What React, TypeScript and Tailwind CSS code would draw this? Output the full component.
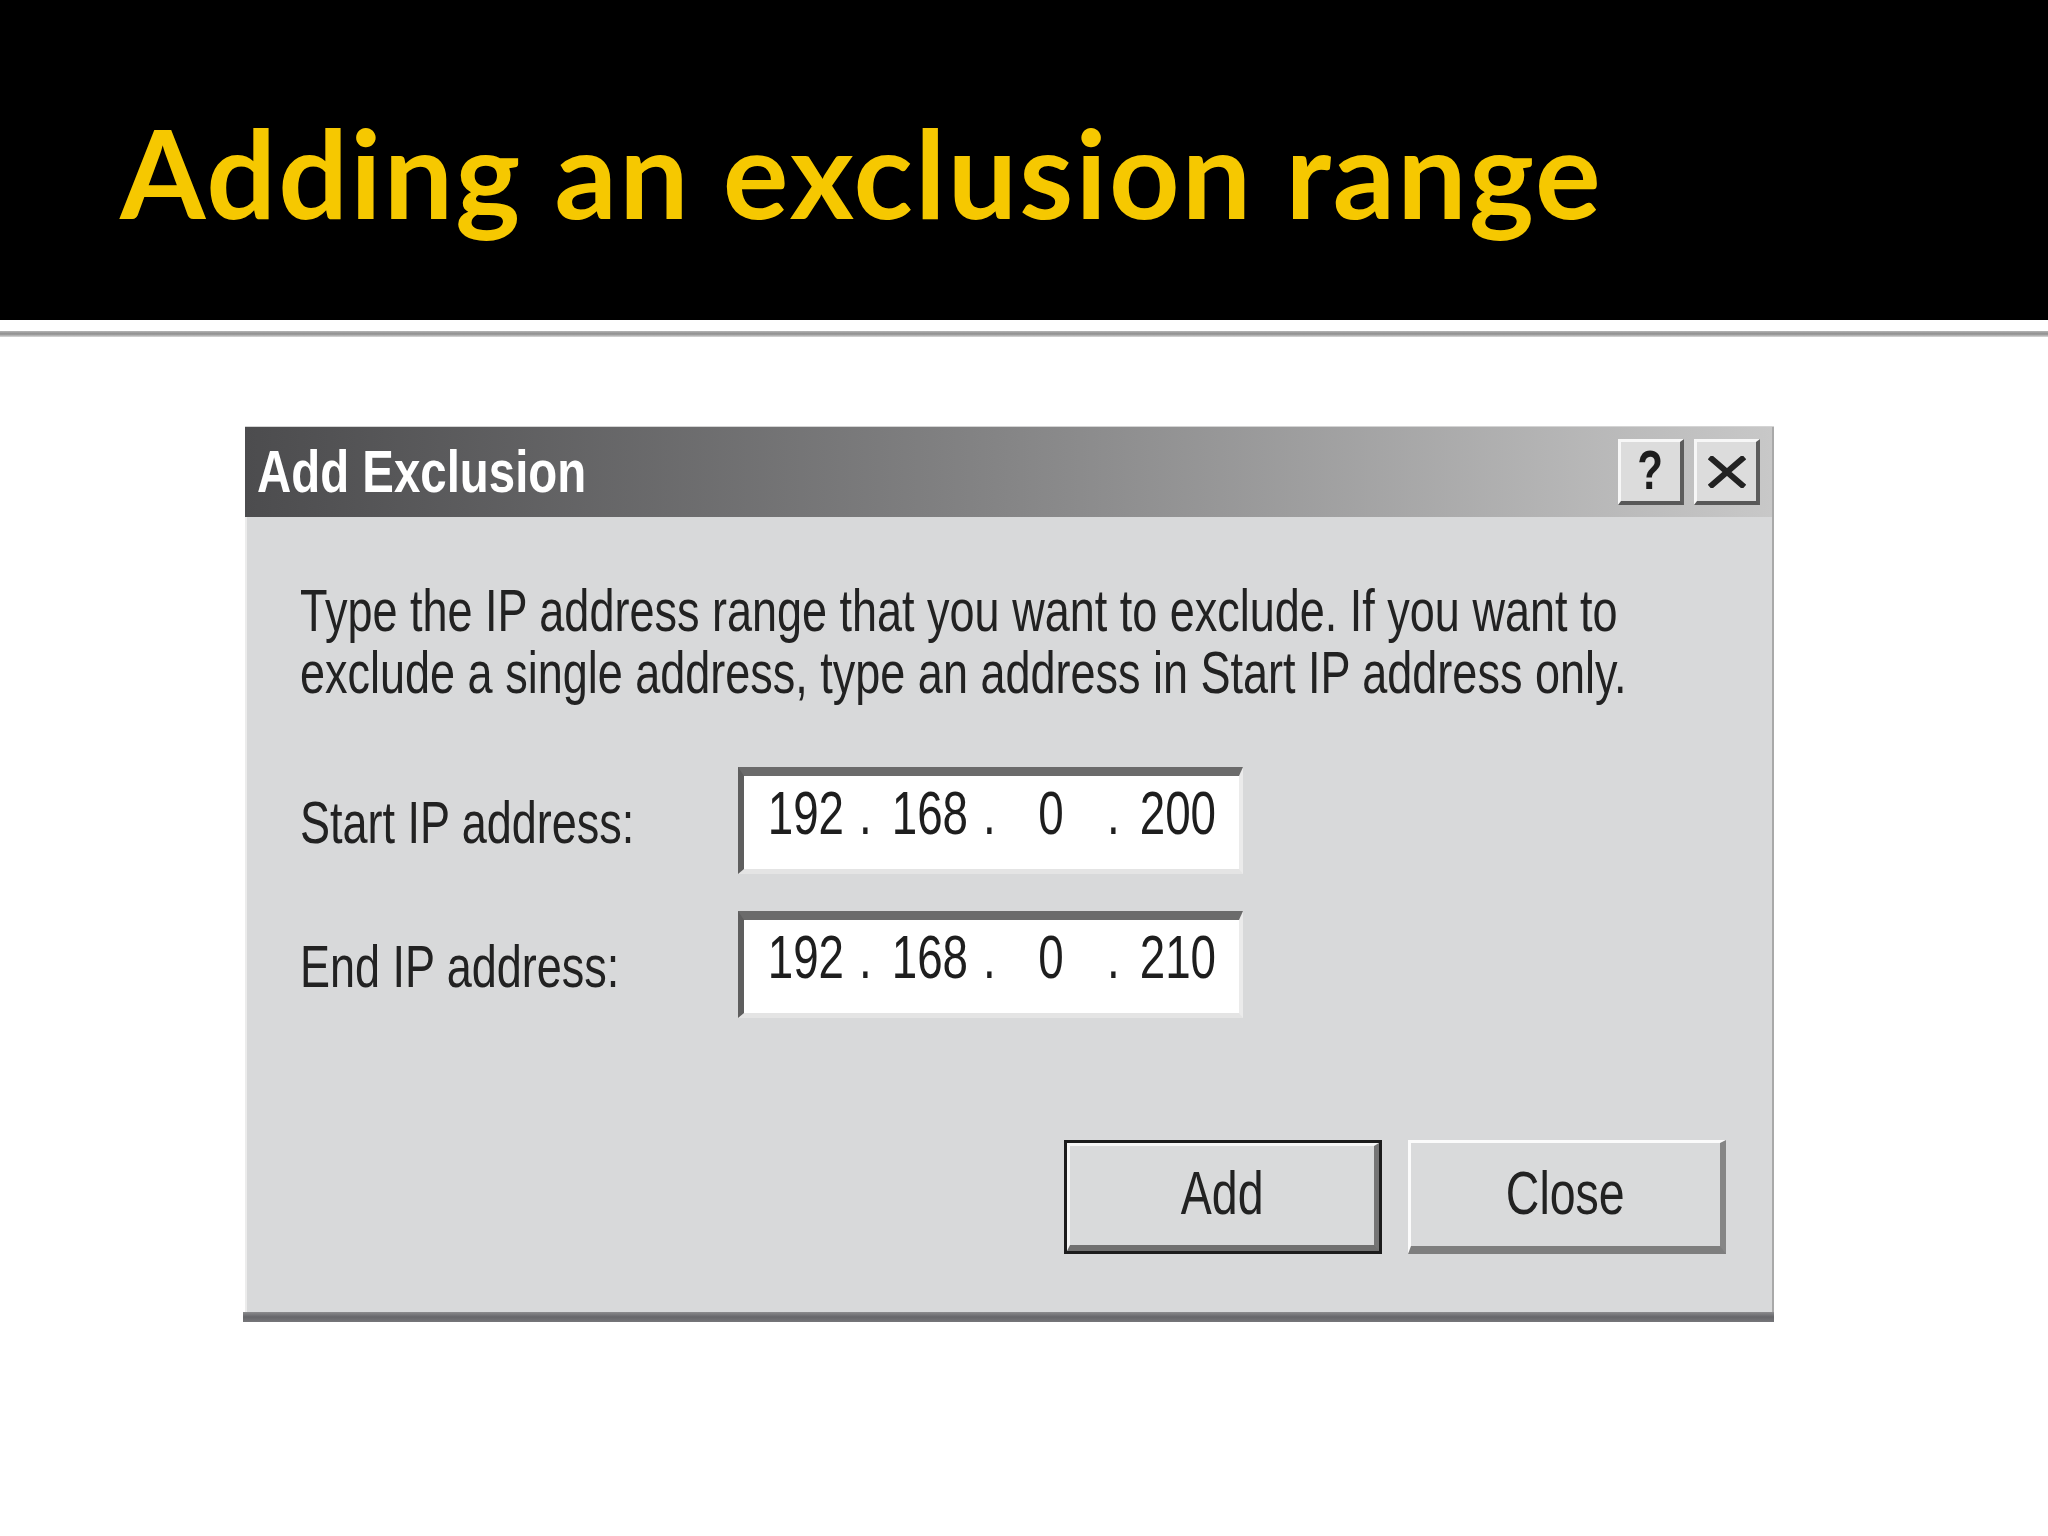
import React from 'react';

type NarrowProps = {
  children: React.ReactNode;
  center?: boolean;
  title?: boolean;
};

// Dialog text is set in a condensed width, so squeeze each run horizontally
function Narrow({ children, center, title }: NarrowProps) {
  const scale = title ? 'scale-x-[0.79]' : 'scale-x-[0.75]';
  const origin = center ? 'origin-center' : 'origin-left';
  return <span className={`inline-block whitespace-nowrap ${scale} ${origin}`}>{children}</span>;
}

const CaptionButton: React.FC<{ children: React.ReactNode }> = ({ children }) => (
  <div className="w-[66px] h-[66px] bg-[#dcdcdc] border-t-[3px] border-l-[3px] border-b-[4px] border-r-[4px] border-t-[#f7f7f7] border-l-[#f7f7f7] border-b-[#585858] border-r-[#5c5c5c] flex items-center justify-center">
    {children}
  </div>
);

const IpField: React.FC<{ octets: string[] }> = ({ octets }) => (
  <div className="w-[505px] h-[107px] bg-white border-t-[9px] border-l-[6px] border-b-[5px] border-r-[4px] border-t-[#6b6b6b] border-l-[#5e5e5e] border-b-[#e4e4e4] border-r-[#ebebeb] pt-[6px] pl-[11px] flex text-[61px] leading-[62px] text-[#1e1e1e]">
    {octets.map((octet, i) => (
      <React.Fragment key={i}>
        {i > 0 && (
          <div className="w-[28px] text-center">
            <Narrow center>.</Narrow>
          </div>
        )}
        <div className="w-[96px] text-center">
          <Narrow center>{octet}</Narrow>
        </div>
      </React.Fragment>
    ))}
  </div>
);

const FieldRow: React.FC<{ label: string; octets: string[]; className?: string }> = ({ label, octets, className = '' }) => (
  <div className={`flex ${className}`}>
    <div className="w-[438px] pt-[25px] text-[60px] leading-[62px] text-[#222]">
      <Narrow>{label}</Narrow>
    </div>
    <IpField octets={octets} />
  </div>
);

export default function App() {
  return (
    <div className="min-h-[1536px] bg-white" style={{ fontFamily: '"Liberation Sans", Arial, sans-serif' }}>
      {/* Slide title */}
      <header className="h-[320px] bg-black pl-[120px] pt-[98px]">
        <h1
          className="text-[123px] leading-[148px] font-bold text-[#f6c800] tracking-[2.2px] whitespace-nowrap"
          style={{ fontFamily: 'Lato, "Open Sans", sans-serif' }}
        >
          Adding an exclusion range
        </h1>
      </header>
      <div className="mt-[11px] h-[6px] bg-gradient-to-b from-[#b4b4b4] via-[#8e8e8e] to-[#dadada]" />

      {/* Add Exclusion dialog */}
      <div className="ml-[245px] mt-[89px] w-[1529px] border-t border-[#d4d4d4]">
        <div className="h-[90px] bg-gradient-to-r from-[#4c4c4e] via-[#858586] to-[#c8c8c8] flex items-center justify-between pl-[12px] pr-[12px] border-r-[2px] border-[#a9a9a9]">
          <div className="text-[60px] leading-[62px] font-bold text-white">
            <Narrow title>Add Exclusion</Narrow>
          </div>
          <div className="flex gap-[10px]">
            <CaptionButton>
              <span className="text-[56px] leading-[56px] font-bold text-[#1c1c1c] pb-[4px]">
                <Narrow center>?</Narrow>
              </span>
            </CaptionButton>
            <CaptionButton>
              <svg width="38" height="32" viewBox="0 0 38 32">
                <path d="M4 3 L34 29 M34 3 L4 29" stroke="#222" strokeWidth="6" strokeLinecap="square" fill="none" />
              </svg>
            </CaptionButton>
          </div>
        </div>

        <div className="h-[795px] bg-[#d8d9da] border-l-[2px] border-r-[2px] border-l-[#ececec] border-r-[#a9a9a9] pl-[53px] pr-[46px] flex flex-col">
          <p className="mt-[63px] text-[60px] leading-[62px] text-[#222]">
            <span className="block">
              <Narrow>Type the IP address range that you want to exclude. If you want to</Narrow>
            </span>
            <span className="block">
              <Narrow>exclude a single address, type an address in Start IP address only.</Narrow>
            </span>
          </p>

          <FieldRow className="mt-[63px]" label="Start IP address:" octets={['192', '168', '0', '200']} />
          <FieldRow className="mt-[37px]" label="End IP address:" octets={['192', '168', '0', '210']} />

          <div className="mt-[122px] flex justify-end gap-[26px] text-[62px] leading-[62px] text-[#222]">
            <button className="w-[318px] h-[114px] border-[3px] border-[#1c1c1c] bg-[#d9dadb] p-0">
              <div className="h-full border-t-[3px] border-l-[3px] border-b-[6px] border-r-[5px] border-t-[#f6f6f6] border-l-[#f6f6f6] border-b-[#707070] border-r-[#757575] flex items-center justify-center pb-[6px]">
                <Narrow center>Add</Narrow>
              </div>
            </button>
            <button className="w-[318px] h-[114px] bg-[#d9dadb] border-t-[3px] border-l-[3px] border-b-[8px] border-r-[6px] border-t-[#fbfbfb] border-l-[#fbfbfb] border-b-[#7e7e7e] border-r-[#868686] flex items-center justify-center pb-[4px]">
              <Narrow center>Close</Narrow>
            </button>
          </div>
        </div>
        <div className="h-[10px] -ml-[2px] bg-gradient-to-b from-[#8c8c8e] via-[#66666a] to-[#77777a]" />
      </div>
    </div>
  );
}
